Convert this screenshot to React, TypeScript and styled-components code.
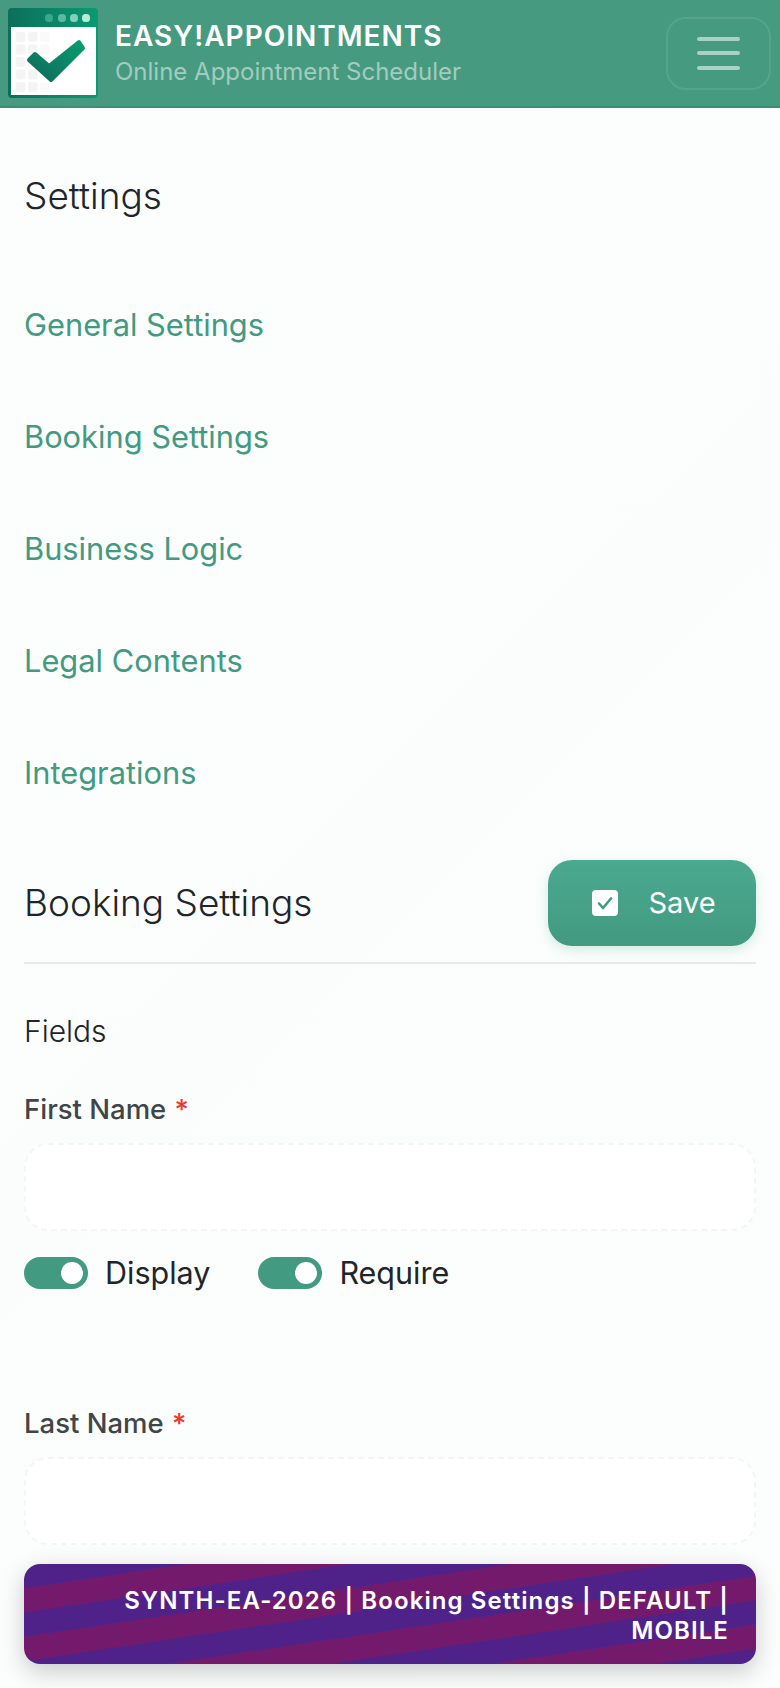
import React from "react";
import styled, { createGlobalStyle } from "styled-components";

const Global = createGlobalStyle`
  html, body { margin: 0; padding: 0; }
  body { background: #fbfdfd; font-family: Inter, "Liberation Sans", sans-serif; color: #212529; }
  * { box-sizing: border-box; }
`;

const Page = styled.div`
  position: relative;
  width: 780px;
  height: 1688px;
  overflow: hidden;
  background: linear-gradient(135deg, #fcfefe 0%, #fafdfc 50%, #fcfefe 100%);
`;

const Header = styled.header`
  display: flex;
  align-items: center;
  justify-content: space-between;
  height: 108px;
  padding: 0 9px 0 8px;
  background: #459a80;
  border-bottom: 2px solid #3e8c74;
`;

const Brand = styled.div`
  display: flex;
  align-items: center;
  gap: 17px;
`;

const BrandText = styled.div`
  display: flex;
  flex-direction: column;
  gap: 6px;
`;

const BrandTitle = styled.div`
  font-size: 28px;
  line-height: 32px;
  font-weight: 600;
  letter-spacing: 1px;
  color: #ffffff;
`;

const BrandSub = styled.div`
  font-size: 24px;
  line-height: 28px;
  font-weight: 400;
  color: rgba(255, 255, 255, 0.5);
`;

const MenuButton = styled.button`
  display: flex;
  flex-direction: column;
  align-items: center;
  justify-content: center;
  gap: 10.5px;
  width: 105px;
  height: 73px;
  padding: 0;
  background: transparent;
  border: 2px solid rgba(255, 255, 255, 0.1);
  border-radius: 20px;
`;

const MenuBar = styled.span`
  display: block;
  width: 43px;
  height: 4px;
  border-radius: 2px;
  background: rgba(255, 255, 255, 0.55);
`;

const Main = styled.main`
  padding: 0 24px;
`;

const PageTitle = styled.h1`
  margin: 0;
  padding-top: 65px;
  font-size: 37px;
  line-height: 46px;
  font-weight: 300;
  color: #212529;
`;

const Nav = styled.nav`
  display: flex;
  flex-direction: column;
  margin-top: 49.5px;
`;

const NavLink = styled.a`
  display: block;
  height: 112px;
  font-size: 30.8px;
  line-height: 112px;
  color: #429a80;
`;

const SectionHead = styled.div`
  display: flex;
  align-items: center;
  justify-content: space-between;
  margin-top: 31px;
  padding-bottom: 16px;
  border-bottom: 2px solid #e6e9e9;
`;

const SectionTitle = styled.h2`
  margin: 0;
  font-size: 37px;
  line-height: 46px;
  font-weight: 300;
  color: #212529;
`;

const SaveButton = styled.button`
  display: flex;
  align-items: center;
  justify-content: center;
  gap: 30px;
  width: 208px;
  height: 86px;
  padding: 0 0 0 4px;
  border: none;
  border-radius: 24px;
  background: linear-gradient(180deg, #4aa98f 0%, #429a80 100%);
  box-shadow: 0 4px 12px rgba(66, 154, 128, 0.2);
  color: #ffffff;
  font-family: inherit;
  font-size: 29px;
`;

const SaveIcon = styled.svg`
  width: 26px;
  height: 26px;
  flex: none;
`;

const FieldsTitle = styled.h3`
  margin: 47px 0 0;
  font-size: 30px;
  line-height: 40px;
  font-weight: 300;
  color: #212529;
`;

const Field = styled.div<{ $top: number }>`
  margin-top: ${(p) => p.$top}px;
`;

const Label = styled.label`
  display: block;
  font-size: 27.5px;
  line-height: 32px;
  font-weight: 500;
  color: #404548;
`;

const Star = styled.span`
  color: #f0352c;
  margin-left: 1px;
`;

const Input = styled.div`
  height: 88px;
  margin-top: 18px;
  background: #ffffff;
  border: 2px dashed #f4f6f6;
  border-radius: 24px;
`;

const Toggles = styled.div`
  display: flex;
  gap: 48px;
  margin-top: 25px;
`;

const ToggleItem = styled.div`
  display: flex;
  align-items: center;
  gap: 17px;
  font-size: 30.5px;
  line-height: 34px;
  color: #212529;
`;

const Track = styled.span`
  display: flex;
  align-items: center;
  justify-content: flex-end;
  width: 64px;
  height: 32px;
  padding-right: 5px;
  border-radius: 16px;
  background: #429a80;
`;

const Knob = styled.span`
  width: 22px;
  height: 22px;
  border-radius: 50%;
  background: #ffffff;
`;

const Banner = styled.div`
  position: absolute;
  left: 24px;
  right: 24px;
  top: 1564px;
  height: 100px;
  padding: 22px 27px 0 28px;
  border-radius: 16px;
  background: repeating-linear-gradient(171.5deg, #4f2289 0 24px, #731a6c 24px 48px);
  box-shadow: 0 8px 24px rgba(0, 0, 0, 0.2);
  color: #ffffff;
  font-size: 24px;
  line-height: 30px;
  font-weight: 600;
  letter-spacing: 1.1px;
  text-align: right;
`;

function Logo() {
  return (
    <svg width="90" height="90" viewBox="0 0 90 90" aria-hidden="true">
      <defs>
        <linearGradient id="lh" x1="0" y1="0" x2="1" y2="0">
          <stop offset="0" stopColor="#0b6f5a" />
          <stop offset="1" stopColor="#0a9a72" />
        </linearGradient>
        <linearGradient id="lc" x1="0" y1="1" x2="1" y2="0">
          <stop offset="0" stopColor="#0f6a58" />
          <stop offset="1" stopColor="#079c70" />
        </linearGradient>
      </defs>
      <rect x="0" y="0" width="90" height="90" rx="4" fill="url(#lh)" />
      <rect x="3" y="19" width="85" height="68" fill="#ffffff" />
      <rect x="37" y="6" width="8" height="8" rx="3.5" fill="#3ca58b" />
      <rect x="50" y="6" width="8" height="8" rx="3.5" fill="#5cb9a0" />
      <rect x="62" y="6" width="8" height="8" rx="3.5" fill="#84d0b6" />
      <rect x="74" y="6" width="8" height="8" rx="3.5" fill="#b6ecd2" />
      {[0, 1, 2, 3, 4].map((r) =>
        [0, 1, 2].map((c) => (
          <rect key={`${r}-${c}`} x={8 + c * 12} y={24 + r * 12.5} width="9.5" height="10" rx="2" fill="#f4f4f5" opacity={c === 2 ? 0.5 : 1} />
        ))
      )}
      <path d="M21 52 L27 46 L41 58 L71 34 L75 40 L43 72 Z" fill="url(#lc)" stroke="url(#lc)" strokeWidth="4" strokeLinejoin="round" />
    </svg>
  );
}

function Toggle({ label }: { label: string }) {
  return (
    <ToggleItem>
      <Track>
        <Knob />
      </Track>
      {label}
    </ToggleItem>
  );
}

export default function App() {
  return (
    <Page>
      <Global />
      <Header>
        <Brand>
          <Logo />
          <BrandText>
            <BrandTitle>EASY!APPOINTMENTS</BrandTitle>
            <BrandSub>Online Appointment Scheduler</BrandSub>
          </BrandText>
        </Brand>
        <MenuButton aria-label="menu">
          <MenuBar />
          <MenuBar />
          <MenuBar />
        </MenuButton>
      </Header>
      <Main>
        <PageTitle>Settings</PageTitle>
        <Nav>
          <NavLink>General Settings</NavLink>
          <NavLink>Booking Settings</NavLink>
          <NavLink>Business Logic</NavLink>
          <NavLink>Legal Contents</NavLink>
          <NavLink>Integrations</NavLink>
        </Nav>
        <SectionHead>
          <SectionTitle>Booking Settings</SectionTitle>
          <SaveButton>
            <SaveIcon viewBox="0 0 26 26">
              <rect width="26" height="26" rx="4" fill="#ffffff" />
              <path d="M7 13.5 L11 18 L19 8.5" fill="none" stroke="#429a80" strokeWidth="2.6" strokeLinecap="round" strokeLinejoin="round" />
            </SaveIcon>
            Save
          </SaveButton>
        </SectionHead>
        <FieldsTitle>Fields</FieldsTitle>
        <Field $top={42}>
          <Label>
            First Name <Star>*</Star>
          </Label>
          <Input />
          <Toggles>
            <Toggle label="Display" />
            <Toggle label="Require" />
          </Toggles>
        </Field>
        <Field $top={117}>
          <Label>
            Last Name <Star>*</Star>
          </Label>
          <Input />
        </Field>
      </Main>
      <Banner>SYNTH-EA-2026 | Booking Settings | DEFAULT | MOBILE</Banner>
    </Page>
  );
}
